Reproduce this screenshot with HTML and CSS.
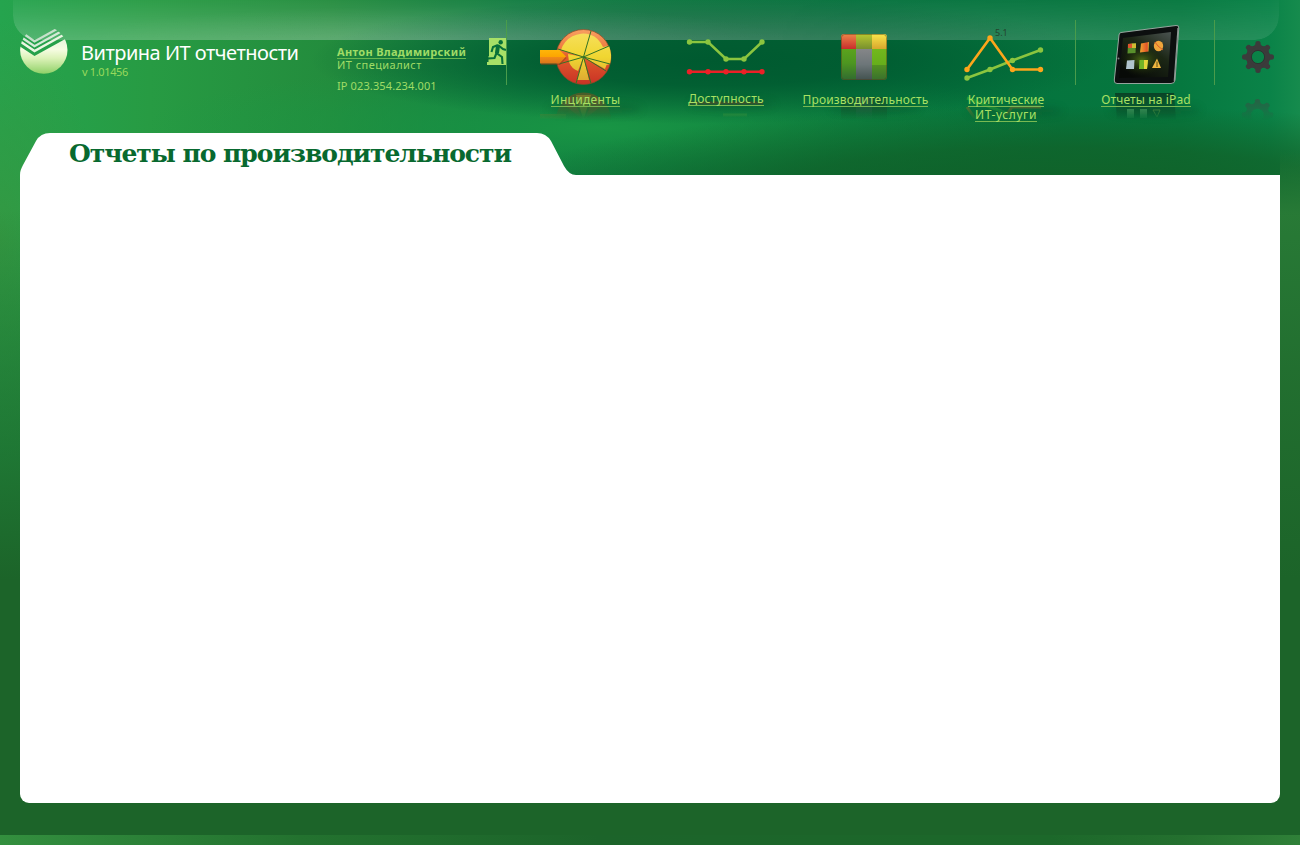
FILE: index.html
```html
<!DOCTYPE html>
<html lang="ru">
<head>
<meta charset="utf-8">
<title>Витрина ИТ отчетности</title>
<link rel="stylesheet" href="styles.css">
</head>
<body>
<div class="page">
  <div class="gloss"></div>
  <header class="header">
    <div class="brand">
      <svg class="logo" width="48" height="48" viewBox="0 0 48 48">
        <defs>
          <linearGradient id="ball" gradientUnits="userSpaceOnUse" x1="0" y1="11" x2="0" y2="46"><stop offset="0" stop-color="#e6f4dd"/><stop offset=".3" stop-color="#f6fce2"/><stop offset=".55" stop-color="#dcf2b8"/><stop offset="1" stop-color="#8ed066"/></linearGradient>
          <clipPath id="disc"><circle cx="23.8" cy="22" r="23.7"/></clipPath>
        </defs>
        <g clip-path="url(#disc)" fill="none">
          <path d="M0 18.500L14.500 28L48 9.500V48H0Z" fill="url(#ball)"/>
          <path d="M0 13.300L14.500 23L48 4.500" stroke="#eaf6e2" stroke-width="2.400"/>
          <path d="M2 9.700L14.500 18.200L42 3" stroke="#d5ead7" stroke-width="2.300"/>
          <path d="M5 6.800L14.500 13.400L37 1" stroke="#c6e1cb" stroke-width="2.300"/>
        </g>
      </svg>
      <div class="brand-text">
        <div class="brand-name">Витрина ИТ отчетности</div>
        <div class="version">v 1.01456</div>
      </div>
    </div>
    <div class="user">
      <a class="user-name">Антон Владимирский</a>
      <div class="user-role">ИТ специалист</div>
      <div class="user-ip">IP 023.354.234.001</div>
    </div>
    <svg class="exit" width="20" height="28" viewBox="0 0 20 28">
      <path d="M2 0H20V27H0V24H1.500V18H2Z" fill="#a7e067"/>
      <circle cx="13.700" cy="4.200" r="2.200" fill="#087039"/>
      <path d="M11 7L6 9L4.500 14M11 7L16 11L19 12M10.800 8L9.500 15L15 19L15.500 26M9.500 15L7.500 20L1 20.500" fill="none" stroke="#087039" stroke-width="2.100"/>
      <path d="M9 7.500L13 8L12 15L8 15Z" fill="#087039"/>
    </svg>
    <nav class="nav">
      <a class="item incidents">
        <svg width="92" height="62" viewBox="540 26 92 62">
          <defs>
            <linearGradient id="rim" x1="0" y1="0" x2="0" y2="1"><stop offset="0" stop-color="#f8a061"/><stop offset=".35" stop-color="#ed793f"/><stop offset=".5" stop-color="#e05a2c"/><stop offset="1" stop-color="#c93225"/></linearGradient>
            <linearGradient id="core" x1="0" y1="0" x2="0" y2="1"><stop offset="0" stop-color="#f6df5a"/><stop offset=".5" stop-color="#f0d631"/><stop offset="1" stop-color="#dfac32"/></linearGradient>
            <linearGradient id="arr" x1="0" y1="0" x2="0" y2="1"><stop offset="0" stop-color="#ffb509"/><stop offset=".5" stop-color="#fca501"/><stop offset=".55" stop-color="#f18a17"/><stop offset="1" stop-color="#d9751b"/></linearGradient>
          </defs>
          <circle cx="583.500" cy="57" r="27.500" fill="url(#rim)" stroke="#8b4925" stroke-width=".7"/>
          <path d="M583.500 57L561 50A23.500 23.500 0 0 1 590 34.500L591 35Q598 37 603 47L609 46A27.500 27.500 0 0 1 610 64L606.500 65L605 69L583.500 57L589 80H577L583.500 57L578 71A15 15 0 0 1 569 62L568 54Z" fill="url(#core)"/>
          <path d="M583.500 57L591 31M583.500 57L609 46M583.500 57L610 64M583.500 57L606 71M583.500 57L591 83.500M583.500 57L576 83.500M583.500 57L559 64M583.500 57L558 49" stroke="#337325" stroke-width="1"/>
          <path d="M541 52H560L566.500 58L560 65H541Z" fill="#8b3d14" opacity=".5"/>
          <path d="M540 50H559.500L566 56.500L559.500 63.500H540Z" fill="url(#arr)"/>
        </svg>
        <span class="label">Инциденты</span>
      </a>
      <a class="item availability">
        <svg width="80" height="40" viewBox="686 37 80 40">
          <path d="M689.500 42H708L726 59H744L762 42" fill="none" stroke="#8bc53f" stroke-width="2.500"/>
          <g fill="#8bc53f"><circle cx="689.500" cy="42" r="2.700"/><circle cx="708" cy="42" r="2.700"/><circle cx="726" cy="59" r="2.700"/><circle cx="744" cy="59" r="2.700"/><circle cx="762" cy="42" r="2.700"/></g>
          <path d="M689.500 71.700H762" stroke="#ec2027" stroke-width="2.600"/>
          <g fill="#ec2027"><circle cx="689.500" cy="71.700" r="2.700"/><circle cx="708" cy="71.700" r="2.700"/><circle cx="726" cy="71.700" r="2.700"/><circle cx="744" cy="71.700" r="2.700"/><circle cx="762" cy="71.700" r="2.700"/></g>
        </svg>
        <span class="label">Доступность</span>
      </a>
      <a class="item performance">
        <svg width="46" height="46" viewBox="0 0 46 46">
          <defs>
            <clipPath id="tile"><rect width="46" height="46" rx="3"/></clipPath>
            <linearGradient id="t1" x1="0" y1="0" x2="0" y2="1"><stop stop-color="#ed8548"/><stop offset="1" stop-color="#c92c2c"/></linearGradient>
            <linearGradient id="t2" x1="0" y1="0" x2="0" y2="1"><stop stop-color="#b8c831"/><stop offset="1" stop-color="#78902e"/></linearGradient>
            <linearGradient id="t3" x1="0" y1="0" x2="0" y2="1"><stop stop-color="#fae64b"/><stop offset="1" stop-color="#d8a62d"/></linearGradient>
            <linearGradient id="t4" x1="0" y1="0" x2="0" y2="1"><stop stop-color="#5ba31d"/><stop offset=".45" stop-color="#4d9620"/><stop offset="1" stop-color="#316b30"/></linearGradient>
            <linearGradient id="t5" x1="0" y1="0" x2="0" y2="1"><stop stop-color="#858688"/><stop offset=".5" stop-color="#6d7679"/><stop offset="1" stop-color="#42524f"/></linearGradient>
            <linearGradient id="t6" x1="0" y1="0" x2="0" y2="1"><stop stop-color="#72b81d"/><stop offset=".5" stop-color="#66ae1b"/><stop offset=".52" stop-color="#539221"/><stop offset="1" stop-color="#39702d"/></linearGradient>
          </defs>
          <g clip-path="url(#tile)">
            <path d="M0 0H15V15H0Z" fill="url(#t1)"/><path d="M15 0H31V15H15Z" fill="url(#t2)"/><path d="M31 0H46V15H31Z" fill="url(#t3)"/>
            <path d="M0 15H15V46H0Z" fill="url(#t4)"/><path d="M15 15H31V46H15Z" fill="url(#t5)"/><path d="M31 15H46V46H31Z" fill="url(#t6)"/>
          </g>
          <rect x=".5" y=".5" width="45" height="45" rx="3" fill="none" stroke="#513d18" stroke-opacity=".45"/>
        </svg>
        <span class="label">Производительность</span>
      </a>
      <a class="item critical">
        <svg width="88" height="60" viewBox="962 23 88 60">
          <text x="995" y="36" class="mark">5.1</text>
          <path d="M967 78L990 69.500L1012.500 60.500L1040.500 50" fill="none" stroke="#8bc53f" stroke-width="2.500"/>
          <g fill="#8bc53f"><circle cx="967" cy="78" r="2.700"/><circle cx="990" cy="69.500" r="2.700"/><circle cx="1012.500" cy="60.500" r="2.700"/><circle cx="1040.500" cy="50" r="2.700"/></g>
          <path d="M967 69.500L990 38L1012.500 69.500H1040.500" fill="none" stroke="#fda61b" stroke-width="2.600"/>
          <g fill="#fda61b"><circle cx="967" cy="69.500" r="2.700"/><circle cx="990" cy="38" r="2.700"/><circle cx="1012.500" cy="69.500" r="2.700"/><circle cx="1040.500" cy="69.500" r="2.700"/></g>
        </svg>
        <span class="label">Критические</span>
        <span class="label second">ИТ-услуги</span>
      </a>
      <a class="item ipad">
        <svg width="68" height="62" viewBox="1112 24 68 62">
          <defs>
            <linearGradient id="scr" x1="1" y1="0" x2=".3" y2="1"><stop offset="0" stop-color="#4b5351"/><stop offset=".45" stop-color="#1c2716"/><stop offset="1" stop-color="#070a07"/></linearGradient>
            <radialGradient id="glow"><stop stop-color="#4c6a14"/><stop offset="1" stop-color="#152008" stop-opacity="0"/></radialGradient>
            <linearGradient id="gold" x1="0" y1="0" x2="1" y2="0"><stop stop-color="#f0a52f"/><stop offset=".5" stop-color="#e8702b"/><stop offset=".8" stop-color="#e2512a"/><stop offset="1" stop-color="#e8c233"/></linearGradient>
          </defs>
          <path d="M1121 32.500L1176 25.500Q1179 25 1178.800 28L1175 80Q1174.800 83.500 1171 83.500H1117Q1114 83.500 1114.300 80L1119 35Q1119.200 32.800 1121 32.500Z" fill="#0c0f0f" stroke="#a5b0aa" stroke-width=".9"/>
          <path d="M1178 28L1174.300 81" stroke="#8e9a95" stroke-width="1.200"/>
          <path d="M1123 38L1171 32L1168 77L1119 78Z" fill="url(#scr)"/>
          <ellipse cx="1142" cy="60" rx="23" ry="16" fill="url(#glow)"/>
          <path d="M1128 44L1136 43L1135.500 53L1127.500 53.500Z" fill="#59902c"/><path d="M1128 44L1132 43.500V48H1128Z" fill="#dc542e"/><path d="M1132 43.500H1136V48H1132Z" fill="#d3b932"/>
          <path d="M1141 43.500L1149 42L1148.500 51.500L1140 52.500Z" fill="url(#gold)"/>
          <ellipse cx="1158.500" cy="46" rx="4.700" ry="5.200" fill="#f0a53b"/><path d="M1158 46L1155 42M1158 46L1163 50" stroke="#dc5a2a"/>
          <path d="M1127 60.500L1134.500 60L1134 69H1126Z" fill="#b1c4cd"/>
          <path d="M1139.500 60H1148L1147 69H1139Z" fill="#73b527"/><path d="M1144 60H1148L1147 69H1144Z" fill="#e6d63b"/>
          <path d="M1157 58.500L1161 68H1152Z" fill="#efb640"/><path d="M1157 61.500V67" stroke="#5c5019"/>
          <circle cx="1118.500" cy="58.500" r="1" fill="#77807a"/>
        </svg>
        <span class="label">Отчеты на iPad</span>
      </a>
      <a class="item settings">
        <svg width="32" height="32" viewBox="-16 -16 32 32">
          <defs>
            <g id="teeth"><path id="tooth" d="M-5.500 -9L-2.600 -12.800Q-3 -16 0 -16Q3 -16 2.600 -12.800L5.500 -9Z"/><use href="#tooth" transform="rotate(45)"/><use href="#tooth" transform="rotate(90)"/><use href="#tooth" transform="rotate(135)"/><use href="#tooth" transform="rotate(180)"/><use href="#tooth" transform="rotate(225)"/><use href="#tooth" transform="rotate(270)"/><use href="#tooth" transform="rotate(315)"/></g>
            <mask id="hole"><rect x="-16" y="-16" width="32" height="32" fill="#fff"/><circle r="6.300" fill="#000"/></mask>
          </defs>
          <g mask="url(#hole)" fill="#3b3b3b"><circle r="11.800"/><use href="#teeth"/></g>
          <circle r="6.600" fill="none" stroke="#2a302d" stroke-width=".8"/>
        </svg>
      </a>
    </nav>
  </header>
  <svg class="reflections" width="800" height="50" viewBox="500 80 800 50">
    <defs>
      <linearGradient id="fade" x1="0" y1="0" x2="0" y2="1"><stop offset="0" stop-color="#fff"/><stop offset="1" stop-color="#fff" stop-opacity="0"/></linearGradient>
      <mask id="fm" maskUnits="userSpaceOnUse" x="500" y="80" width="800" height="50"><rect x="500" y="89" width="800" height="31" fill="url(#fade)"/></mask>
      <filter id="soft" x="-20%" y="-50%" width="140%" height="200%"><feGaussianBlur stdDeviation="4"/></filter>
    </defs>
    <g fill="#073f22" opacity=".3" filter="url(#soft)"><ellipse cx="595" cy="109" rx="47" ry="5"/><ellipse cx="732" cy="104" rx="43" ry="4"/><ellipse cx="875" cy="108" rx="45" ry="5"/><ellipse cx="1015" cy="111" rx="48" ry="5"/><ellipse cx="1155" cy="110" rx="46" ry="5"/></g>
    <g mask="url(#fm)">
      <circle cx="583.500" cy="120" r="27.500" fill="#6a5523" opacity=".8"/><path d="M583.500 120L563 104L571 96L583.500 120L596 96L604 104Z" fill="#a8452a" opacity=".6"/><path d="M583.500 120L576 95H591Z" fill="#bc8c2c" opacity=".6"/><path d="M540 114H566V119H540Z" fill="#997522"/>
      <path d="M689 103H763" stroke="#7b3022" stroke-width="3" opacity=".7"/><path d="M723 115H747" stroke="#77a837" stroke-width="3"/>
      <rect x="841" y="97" width="46" height="24" fill="#1a4928" opacity=".9"/><rect x="856" y="97" width="16" height="24" fill="#3e5248" opacity=".7"/>
      <path d="M967 98L990 107L1012 115" stroke="#2eaa32" stroke-width="3" fill="none"/><path d="M967 107L976 120M1003 120L1012 107H1041" stroke="#a66b25" stroke-width="3" fill="none"/>
      <path d="M1115 93H1174L1176 120H1117Z" fill="#0b3a22"/><path d="M1127 109H1134V118H1127ZM1140 109H1147V118H1140Z" fill="#7db67c"/><path d="M1153 110H1160L1157 117Z" fill="none" stroke="#9b9c42"/>
      <g transform="translate(1257.500 115)" mask="url(#hole)" fill="#3f4b45" opacity=".9"><circle r="11.800"/><use href="#teeth"/></g>
    </g>
  </svg>
  <main class="panel">
    <div class="tab">
      <svg class="tab-shape" width="556" height="42" viewBox="0 0 556 42"><path d="M0 42C0 38 1 36 3 32L16 8Q20.500 0 30 0H517Q526 0 531 8L544 33Q549 42 556 42Z" fill="#fff"/></svg>
      <h1 class="title">Отчеты по производительности</h1>
    </div>
    <div class="sheet"></div>
  </main>
  <footer class="footer"></footer>
</div>
</body>
</html>
```

FILE: styles.css
```css
* { box-sizing: border-box; }
body { margin: 0; font-family: "Noto Sans", sans-serif; }
.page {
  position: relative;
  width: 1300px;
  height: 845px;
  overflow: hidden;
  display: flex;
  flex-direction: column;
  background:
    radial-gradient(ellipse 400px 64px at 710px 60px, #005a30 0%, rgba(0, 90, 48, .85) 40%, rgba(0, 96, 48, 0) 100%),
    linear-gradient(180deg, rgba(28, 100, 41, 0) 0, rgba(28, 100, 41, 0) 210px, rgba(28, 100, 41, .5) 370px, #1c6429 580px),
    linear-gradient(180deg, rgba(40, 122, 54, 0) 150px, #287a36 215px) 1280px 0 / 20px 845px no-repeat,
    radial-gradient(ellipse 560px 85px at 1060px 190px, rgba(17, 97, 40, .95) 0%, rgba(17, 97, 40, .75) 50%, rgba(17, 97, 40, 0) 100%),
    radial-gradient(ellipse 460px 65px at 600px 128px, rgba(26, 152, 69, .9) 0%, rgba(26, 150, 67, 0) 100%),
    radial-gradient(ellipse 100px 220px at 0 240px, rgba(56, 148, 62, .75), rgba(50, 148, 61, 0)),
    linear-gradient(90deg, #25a44e 0, #279b43 150px, #238c3d 330px, #107b40 520px, #04703c 850px, #06783f 1180px, #0a8348 1270px, #168b4d 1300px);
}
.gloss {
  position: absolute;
  left: 13px;
  top: 0;
  width: 1266px;
  height: 40px;
  border-radius: 0 0 24px 24px;
  background:
    radial-gradient(ellipse 360px 34px at 420px 40px, rgba(255, 255, 255, .1), rgba(255, 255, 255, 0)),
    linear-gradient(180deg, rgba(255, 255, 255, .04), rgba(255, 255, 255, .1) 40%, rgba(255, 255, 255, .21));
  -webkit-mask-image: linear-gradient(90deg, #000 60%, rgba(0, 0, 0, .5));
  mask-image: linear-gradient(90deg, #000 60%, rgba(0, 0, 0, .5));
}
.header { position: relative; z-index: 2; height: 133px; display: flex; align-items: flex-start; flex: none; }
.brand { display: flex; width: 337px; padding: 28px 0 0 20px; }
.brand-text { padding: 10px 0 0 13px; white-space: nowrap; }
.brand-name { font-size: 20px; line-height: 30px; color: #fff; letter-spacing: -.5px; }
.version { font-size: 11px; line-height: 12px; color: #98d95c; margin: -2px 0 0 1px; letter-spacing: -.35px; }
.user { width: 150px; padding-top: 46px; color: #a0dc66; font-size: 11px; line-height: 13px; white-space: nowrap; }
.user-name { display: block; width: max-content; font-weight: 700; line-height: 12px; border-bottom: 1px solid #68b84f; letter-spacing: .33px; }
.user-role { margin-top: -1px; letter-spacing: .45px; }
.user-ip { margin-top: 8px; letter-spacing: .12px; }
.exit { margin-top: 38px; flex: none; }
.nav { display: flex; height: 65px; margin-top: 20px; margin-left: -1px; border-left: 1px solid #4a9c4b; flex: none; }
.item { display: flex; flex-direction: column; align-items: center; color: #a8e063; }
.item svg { flex: none; }
.label { font-size: 12px; line-height: 13px; white-space: nowrap; border-bottom: 1px solid #79b952; letter-spacing: .2px; }
.incidents { width: 157px; padding-top: 6px; }
.incidents .label { margin-top: 5px; letter-spacing: .3px; }
.availability { width: 124px; padding-top: 17px; }
.availability .label { margin-top: 15px; }
.performance { width: 153px; padding-top: 14px; }
.performance svg { margin-right: 2px; }
.performance .label { margin: 13px 0 0 2px; letter-spacing: .15px; }
.critical { width: 134px; padding: 3px 4px 0 0; }
.critical .label { margin-top: 10px; letter-spacing: .1px; }
.critical .second { margin-top: 1px; letter-spacing: .6px; }
.ipad { width: 140px; height: 65px; padding: 4px 0 0 2px; border-left: 1px solid #4a9c4b; border-right: 1px solid #4a9c4b; }
.ipad .label { margin-top: 7px; letter-spacing: .13px; }
.settings { padding: 21px 0 0 27px; }
.mark { font: 9px "Noto Sans", sans-serif; fill: #24422d; }
.reflections { position: absolute; left: 500px; top: 80px; z-index: 1; }
.panel { padding: 0 20px; flex: none; }
.tab { position: relative; width: 556px; height: 42px; padding-left: 49px; }
.tab-shape { position: absolute; left: 0; top: 0; }
.title { position: relative; margin: 0; font-family: "DejaVu Serif", serif; font-weight: 700; font-size: 25px; line-height: 41px; color: #08692f; white-space: nowrap; letter-spacing: -1.03px; }
.sheet { height: 628px; background: #fff; border-radius: 0 0 9px 9px; }
.footer { height: 10px; margin-top: 32px; background: linear-gradient(90deg, #338f3e 0, #2f873b 80px, #23722f 300px, #1c642a 600px, #1c682a 1050px, #24702f 1180px, #2f8038 1300px); }
```
